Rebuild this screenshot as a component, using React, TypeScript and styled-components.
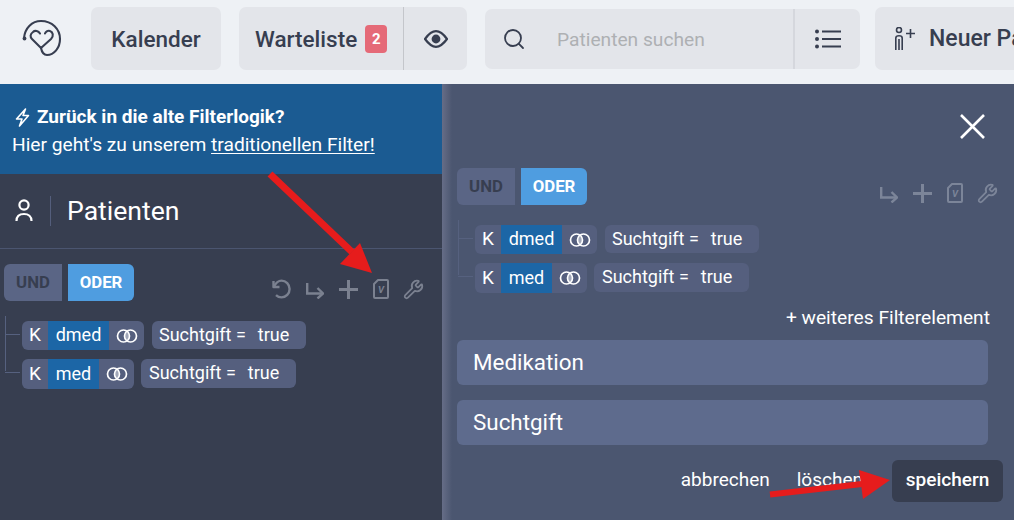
import React from 'react';
import styled, { createGlobalStyle } from 'styled-components';
import { Search, Wrench } from 'lucide-react';

const Global = createGlobalStyle`
  html, body { margin: 0; padding: 0; height: 100%; overflow: hidden; }
  body { font-family: Roboto, "Liberation Sans", sans-serif; background: #373e50; }
  #root { height: 100%; }
`;

const Page = styled.div`
  position: relative;
  width: 1014px;
  height: 520px;
  overflow: hidden;
  display: flex;
  flex-direction: column;
`;

const TopBar = styled.header`
  height: 84px;
  flex: none;
  background: #eef1f5;
  display: flex;
  align-items: flex-start;
  padding-left: 20px;
  color: #373e50;
`;

const Logo = styled.div`
  width: 71px;
  height: 70px;
  flex: none;
  svg { display: block; }
`;

const NavButton = styled.div<{ $w: number; $ml?: number }>`
  width: ${p => p.$w}px;
  margin-left: ${p => p.$ml ?? 0}px;
  height: 63px;
  margin-top: 7px;
  flex: none;
  background: #e3e5ea;
  border-radius: 7px;
  display: flex;
  align-items: center;
  justify-content: center;
  font-size: 22.5px;
  font-weight: 500;
  white-space: nowrap;
`;

const SplitButton = styled(NavButton)`
  justify-content: flex-start;
`;

const SplitMain = styled.div`
  width: 165px;
  height: 100%;
  flex: none;
  display: flex;
  align-items: center;
  padding-left: 16px;
  box-sizing: border-box;
  border-right: 1px solid #c4c6cb;
`;

const Badge = styled.span`
  width: 22px;
  height: 28px;
  margin-left: 8px;
  background: #e56a78;
  color: #fff;
  border-radius: 4px;
  font-size: 15px;
  font-weight: 700;
  display: flex;
  align-items: center;
  justify-content: center;
`;

const SplitIcon = styled.div`
  flex: 1;
  display: flex;
  align-items: center;
  justify-content: center;
`;

const SearchBox = styled.div`
  width: 375px;
  height: 60px;
  margin: 9px 0 0 18px;
  flex: none;
  background: #e3e5ea;
  border-radius: 7px;
  display: flex;
  align-items: center;
`;

const SearchMain = styled.div`
  width: 310px;
  height: 100%;
  flex: none;
  padding-left: 17px;
  box-sizing: border-box;
  display: flex;
  align-items: center;
  border-right: 2px solid #d5d7dd;
`;

const Placeholder = styled.span`
  margin-left: 31px;
  font-size: 19.2px;
  color: #aeb0b3;
`;

const NewButton = styled(NavButton)`
  justify-content: flex-start;
  padding-left: 20px;
  gap: 14px;
  font-size: 23px;
`;

const Body = styled.main`
  flex: 1;
  min-height: 0;
  display: flex;
`;

const LeftPanel = styled.section`
  width: 442px;
  flex: none;
  background: #373e50;
  color: #fff;
`;

const Banner = styled.div`
  height: 90px;
  box-sizing: border-box;
  padding: 19px 12px 0;
  background: #1b5b92;
  font-size: 19.2px;
  line-height: 28px;
`;

const BannerTitle = styled.div`
  display: flex;
  align-items: center;
  gap: 7px;
  padding-left: 3px;
  font-weight: 700;
  font-size: 19px;
`;

const BannerLink = styled.span`
  text-decoration: underline;
  text-underline-offset: 2px;
`;

const PanelHead = styled.div`
  height: 75px;
  box-sizing: border-box;
  display: flex;
  align-items: center;
  padding-left: 15px;
  border-bottom: 1px solid #4b5570;
`;

const HeadDivider = styled.div`
  width: 1px;
  height: 30px;
  margin: 0 16px 0 17px;
  background: #545e7c;
`;

const HeadTitle = styled.div`
  font-size: 26.6px;
  padding-bottom: 2px;
`;

const GroupArea = styled.div<{ $left: number; $top: number; $right: number }>`
  padding: ${p => p.$top}px ${p => p.$right}px 0 ${p => p.$left}px;
`;

const GroupHead = styled.div`
  display: flex;
  align-items: flex-start;
  justify-content: space-between;
`;

const LogicSwitch = styled.div`
  display: flex;
  gap: 6px;
`;

const LogicButton = styled.div<{ $active?: boolean }>`
  height: 37px;
  width: ${p => (p.$active ? 66 : 58)}px;
  box-sizing: border-box;
  padding-bottom: 2px;
  background: ${p => (p.$active ? '#4f9de0' : '#5a6585')};
  color: ${p => (p.$active ? '#fff' : '#373e50')};
  border-radius: ${p => (p.$active ? '0 6px 6px 0' : '6px 0 0 6px')};
  font-size: 16.8px;
  font-weight: 700;
  display: flex;
  align-items: center;
  justify-content: center;
`;

const Tools = styled.div<{ $color: string }>`
  display: flex;
  align-items: center;
  gap: 15px;
  margin-top: 15px;
  height: 20px;
  color: ${p => p.$color};
  svg { display: block; flex: none; }
  svg:last-child { margin-left: -1px; }
`;

const Tree = styled.div`
  position: relative;
  margin: 20px 0 0 1px;
  padding-left: 17px;
  display: flex;
  flex-direction: column;
  gap: 9px;
  &::before {
    content: '';
    position: absolute;
    left: 0;
    top: -5px;
    height: 55px;
    width: 1px;
    background: #56617f;
  }
`;

const Row = styled.div<{ $gap: number }>`
  position: relative;
  display: flex;
  align-items: flex-start;
  gap: ${p => p.$gap}px;
  font-size: 18px;
  color: #fff;
  &::before {
    content: '';
    position: absolute;
    left: -17px;
    top: 13px;
    width: 15px;
    height: 1px;
    background: #56617f;
  }
`;

const FieldChip = styled.div<{ $tall?: boolean }>`
  height: ${p => (p.$tall ? 30 : 29)}px;
  display: flex;
  align-items: stretch;
  background: #555f7e;
  border-radius: 6px;
  overflow: hidden;
`;

const ChipKey = styled.span`
  width: 26px;
  padding-bottom: 2px;
  box-sizing: border-box;
  font-size: 19px;
  display: flex;
  align-items: center;
  justify-content: center;
`;

const ChipName = styled.span<{ $w: number }>`
  width: ${p => p.$w}px;
  padding-bottom: 2px;
  box-sizing: border-box;
  background: #1c66a6;
  display: flex;
  align-items: center;
  justify-content: center;
`;

const ChipIcon = styled.span`
  width: 35px;
  display: flex;
  align-items: center;
  justify-content: center;
`;

const ValueChip = styled.div<{ $tall?: boolean }>`
  height: ${p => (p.$tall ? 29 : 28)}px;
  width: ${p => (p.$tall ? 155 : 154)}px;
  box-sizing: border-box;
  padding: 0 0 2px ${p => (p.$tall ? 8 : 7)}px;
  background: #555f7e;
  border-radius: 6px;
  display: flex;
  align-items: center;
  gap: 12px;
`;

const Drawer = styled.section`
  flex: 1;
  position: relative;
  background: linear-gradient(90deg, #666d87 0, #4b5670 10px);
  color: #fff;
`;

const CloseRow = styled.div`
  height: 84px;
  display: flex;
  justify-content: flex-end;
  padding: 30px 29px 0 0;
  box-sizing: border-box;
`;

const AddLink = styled.div`
  margin: 14px 24px 12px 0;
  text-align: right;
  font-size: 19.2px;
  line-height: 21px;
`;

const FieldBox = styled.div`
  height: 45px;
  box-sizing: border-box;
  margin: 0 26px 15px 15px;
  padding: 0 0 2px 16px;
  background: #5e6b8d;
  border-radius: 6px;
  font-size: 22.4px;
  display: flex;
  align-items: center;
`;

const Actions = styled.div`
  display: flex;
  align-items: center;
  justify-content: flex-end;
  padding-right: 11px;
  font-size: 19px;
`;

const ActionLink = styled.span<{ $mr: number }>`
  margin-right: ${p => p.$mr}px;
  padding-bottom: 3px;
`;

const SaveButton = styled.div`
  width: 111px;
  height: 42px;
  box-sizing: border-box;
  padding-bottom: 3px;
  background: #373e50;
  border-radius: 6px;
  font-weight: 500;
  display: flex;
  align-items: center;
  justify-content: center;
`;

const Annotations = styled.svg`
  position: absolute;
  left: 0;
  top: 0;
  pointer-events: none;
`;

const LogoIcon = () => (
  <svg width="50" height="70" viewBox="20 0 50 70" fill="none" stroke="#373e50" strokeWidth="2.1" strokeLinecap="round" strokeLinejoin="round">
    <path d="M24 38C25 28 32 21 41 21C52 21 60 29 60 39C60 48 54 55 47 55C44 55 42 53 41 48" />
    <path d="M40 33.5C38.5 31 35 30 33 32C30 34 30 37 32 39L41 48L51 39C54 36 53 32 50 31C47.5 30 45.5 32 45 33.5" />
    <circle cx="24.5" cy="38.5" r="1.9" fill="#373e50" stroke="none" />
  </svg>
);

const EyeIcon = () => (
  <svg width="24" height="18" viewBox="0 0 24 18" fill="none" stroke="#373e50" strokeWidth="2.2">
    <path d="M1 9C5 3.5 9 1.2 12 1.2C15 1.2 19 3.5 23 9C19 14.5 15 16.8 12 16.8C9 16.8 5 14.5 1 9Z" />
    <circle cx="12" cy="9" r="4.4" fill="#373e50" stroke="none" />
  </svg>
);

const ListIcon = () => (
  <svg width="26" height="20" viewBox="0 0 26 20" fill="none" stroke="#373e50" strokeWidth="2.2">
    <path d="M7 2.5H26M7 10H26M7 17.5H26" />
    <circle cx="2" cy="2.5" r="2" fill="#373e50" stroke="none" />
    <circle cx="2" cy="10" r="2" fill="#373e50" stroke="none" />
    <circle cx="2" cy="17.5" r="2" fill="#373e50" stroke="none" />
  </svg>
);

const NewPatientIcon = () => (
  <svg width="20" height="23" viewBox="0 0 20 23" fill="none" stroke="#373e50" strokeWidth="1.6">
    <circle cx="4" cy="3" r="2.5" />
    <path d="M.8 23V11C.8 8 7.2 8 7.2 11V23M4 12V23" />
    <path d="M11 6.5H20M15.5 2V11" />
  </svg>
);

const PersonIcon = () => (
  <svg width="18" height="24" viewBox="0 0 18 24" fill="none" stroke="#fff" strokeWidth="2.2">
    <circle cx="9" cy="6" r="4.6" />
    <path d="M1.5 22C1.5 17.5 4.5 15 9 15C13.5 15 16.5 17.5 16.5 22" />
  </svg>
);

const BoltIcon = () => (
  <svg width="15" height="19" viewBox="0 0 15 19" fill="none" stroke="#fff" strokeWidth="1.6" strokeLinejoin="round">
    <path d="M10.5 1L1.5 11H7L4.5 18L13.5 7.5H8Z" />
  </svg>
);

const CloseIcon = () => (
  <svg width="25" height="25" viewBox="0 0 25 25" fill="none" stroke="#fff" strokeWidth="2.6">
    <path d="M1 1L24 24M24 1L1 24" />
  </svg>
);

const UndoIcon = () => (
  <svg width="19" height="20" viewBox="0 0 19 20" fill="none" stroke="currentColor" strokeWidth="2.4" strokeLinejoin="round">
    <path d="M1.5 2V8H7.5" />
    <path d="M2 7.5C4 3.5 7 1.6 9.5 1.6C14 1.6 17.6 5.4 17.6 10C17.6 14.6 14 18.4 9.5 18.4C7.5 18.4 5.5 17.6 4 16.2" />
  </svg>
);

const ReturnIcon = () => (
  <svg width="18" height="16" viewBox="0 0 18 16" fill="none" stroke="currentColor" strokeWidth="2.4" style={{ marginTop: 3 }}>
    <path d="M1.2 0V10.5H16.5" />
    <path d="M11.5 5L17 10.5L11.5 15.5" />
  </svg>
);

const PlusIcon = () => (
  <svg width="19" height="19" viewBox="0 0 19 19" fill="none" stroke="currentColor" strokeWidth="3">
    <path d="M0 9.5H19M9.5 0V19" />
  </svg>
);

const DocIcon = () => (
  <svg width="16" height="20" viewBox="0 0 16 20" fill="none" stroke="currentColor" strokeWidth="2" strokeLinejoin="round">
    <path d="M5 1H14C14.6 1 15 1.4 15 2V18C15 18.6 14.6 19 14 19H2C1.4 19 1 18.6 1 18V5Z" />
    <text x="8" y="14" fontSize="9.5" fontWeight="700" fontStyle="italic" fontFamily="Roboto, sans-serif" textAnchor="middle" fill="currentColor" stroke="none">V</text>
  </svg>
);

const LinkRings = () => (
  <svg width="22" height="14" viewBox="0 0 22 14" fill="none" stroke="#fff" strokeWidth="1.7">
    <path d="M11 2.5A6 6 0 0 1 11 11.5A6 6 0 0 1 11 2.5Z" fill="#fff" stroke="none" opacity="0.45" />
    <circle cx="7.5" cy="7" r="6" />
    <circle cx="14.5" cy="7" r="6" />
  </svg>
);

type Filter = { name: string; nameWidth: number; gap: number; tall?: boolean };

const filters: Filter[] = [
  { name: 'dmed', nameWidth: 61, gap: 8 },
  { name: 'med', nameWidth: 51, gap: 7, tall: true },
];

const FilterGroup = ({ left, top, right, toolColor, undo }: { left: number; top: number; right: number; toolColor: string; undo?: boolean }) => (
  <GroupArea $left={left} $top={top} $right={right}>
    <GroupHead>
      <LogicSwitch>
        <LogicButton>UND</LogicButton>
        <LogicButton $active>ODER</LogicButton>
      </LogicSwitch>
      <Tools $color={toolColor}>
        {undo && <UndoIcon />}
        <ReturnIcon />
        <PlusIcon />
        <DocIcon />
        <Wrench size={21} strokeWidth={2} />
      </Tools>
    </GroupHead>
    <Tree>
      {filters.map(f => (
        <Row key={f.name} $gap={f.gap}>
          <FieldChip $tall={f.tall}>
            <ChipKey>K</ChipKey>
            <ChipName $w={f.nameWidth}>{f.name}</ChipName>
            <ChipIcon><LinkRings /></ChipIcon>
          </FieldChip>
          <ValueChip $tall={f.tall}>
            <span>Suchtgift =</span>
            <span>true</span>
          </ValueChip>
        </Row>
      ))}
    </Tree>
  </GroupArea>
);

export default function App() {
  return (
    <Page>
      <Global />
      <TopBar>
        <Logo><LogoIcon /></Logo>
        <NavButton $w={130}>Kalender</NavButton>
        <SplitButton $w={228} $ml={18}>
          <SplitMain>
            Warteliste
            <Badge>2</Badge>
          </SplitMain>
          <SplitIcon><EyeIcon /></SplitIcon>
        </SplitButton>
        <SearchBox>
          <SearchMain>
            <Search size={24} color="#373e50" strokeWidth={1.8} />
            <Placeholder>Patienten suchen</Placeholder>
          </SearchMain>
          <SplitIcon><ListIcon /></SplitIcon>
        </SearchBox>
        <NewButton $w={200} $ml={15}>
          <NewPatientIcon />
          Neuer Patient
        </NewButton>
      </TopBar>
      <Body>
        <LeftPanel>
          <Banner>
            <BannerTitle>
              <BoltIcon />
              Zurück in die alte Filterlogik?
            </BannerTitle>
            <div>Hier geht's zu unserem <BannerLink>traditionellen Filter!</BannerLink></div>
          </Banner>
          <PanelHead>
            <PersonIcon />
            <HeadDivider />
            <HeadTitle>Patienten</HeadTitle>
          </PanelHead>
          <FilterGroup left={4} top={15} right={18} toolColor="#7b8190" undo />
        </LeftPanel>
        <Drawer>
          <CloseRow><CloseIcon /></CloseRow>
          <FilterGroup left={15} top={0} right={16} toolColor="#7c8599" />
          <AddLink>+ weiteres Filterelement</AddLink>
          <FieldBox>Medikation</FieldBox>
          <FieldBox>Suchtgift</FieldBox>
          <Actions>
            <ActionLink $mr={27}>abbrechen</ActionLink>
            <ActionLink $mr={29}>löschen</ActionLink>
            <SaveButton>speichern</SaveButton>
          </Actions>
        </Drawer>
      </Body>
      <Annotations width="1014" height="520" viewBox="0 0 1014 520">
        <path d="M270 174L352 252" stroke="#e61c1c" strokeWidth="7" />
        <path d="M372 273L340 264L360 243Z" fill="#e61c1c" />
        <path d="M770 494.5L862 484" stroke="#e61c1c" strokeWidth="6" />
        <path d="M890 480L859 470L863 499Z" fill="#e61c1c" />
      </Annotations>
    </Page>
  );
}
